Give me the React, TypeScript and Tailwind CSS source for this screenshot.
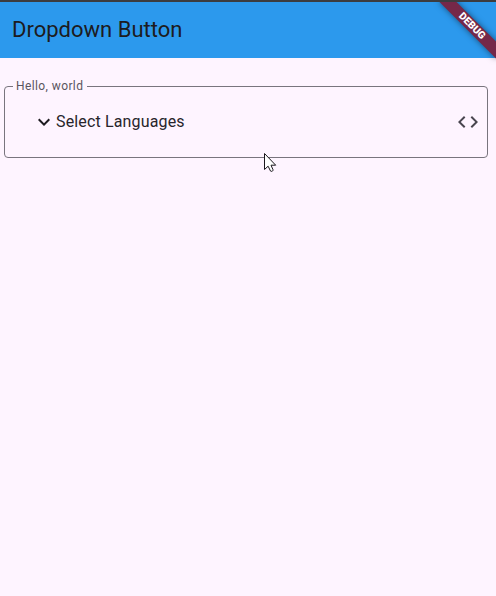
function DebugBanner() {
  return (
    <div className="pointer-events-none absolute right-0 top-0 h-[70px] w-[70px] overflow-hidden">
      <div className="ml-[6px] mt-[18px] flex h-3 w-20 rotate-45 items-center justify-center bg-[#752849] shadow-[0_0_6px_rgba(0,0,0,0.5)]">
        <span className="text-[10.2px] font-black leading-none text-white">DEBUG</span>
      </div>
    </div>
  );
}

function MousePointer() {
  return (
    <svg className="absolute left-[264px] top-[152px]" width="14" height="22" viewBox="0 0 14 22">
      <path
        d="M.5 1.500v16l3.600-3.300 2.400 4.800c.4.900 3 .1 2.500-1.300L7 13.200h4.700z"
        fill="#fff"
        stroke="#1a171c"
        strokeWidth="1"
        strokeLinejoin="round"
      />
    </svg>
  );
}

export default function App() {
  return (
    <div className="relative flex h-[596px] w-[496px] flex-col overflow-hidden bg-[#fef4ff] font-['Roboto',sans-serif] text-[#1d1b20]">
      <div className="h-0.5 bg-[#3c3c40]" />
      <div className="relative">
        <header className="flex h-14 items-center bg-[#2c99ed] px-3">
          <h1 className="text-[22px] leading-7">Dropdown Button</h1>
        </header>
        <DebugBanner />
      </div>
      <main className="flex flex-col pl-1 pr-2 pt-[21px]">
        <fieldset className="rounded border border-[#79747e] pb-[7px] pl-[27px] pr-[7px]">
          <legend className="-ml-[19px] pl-[3px] pr-1 text-xs leading-[15px] tracking-[0.4px] text-[#5a5560]">
            Hello, world
          </legend>
          <div className="flex h-14 items-center">
            <svg className="h-6 w-6" viewBox="0 0 24 24" fill="currentColor">
              <path d="M7.410 8.590 12 13.170l4.590-4.580L18 10l-6 6-6-6z" />
            </svg>
            <span className="grow text-base tracking-[0.15px] text-[#28252b]">Select Languages</span>
            <svg className="h-6 w-6 text-[#49454f]" viewBox="0 0 24 24" fill="currentColor">
              <path d="M9.400 16.600 4.800 12l4.600-4.600L8 6l-6 6 6 6zM14.600 16.600l4.600-4.600-4.600-4.600L16 6l6 6-6 6z" />
            </svg>
          </div>
        </fieldset>
      </main>
      <MousePointer />
    </div>
  );
}
